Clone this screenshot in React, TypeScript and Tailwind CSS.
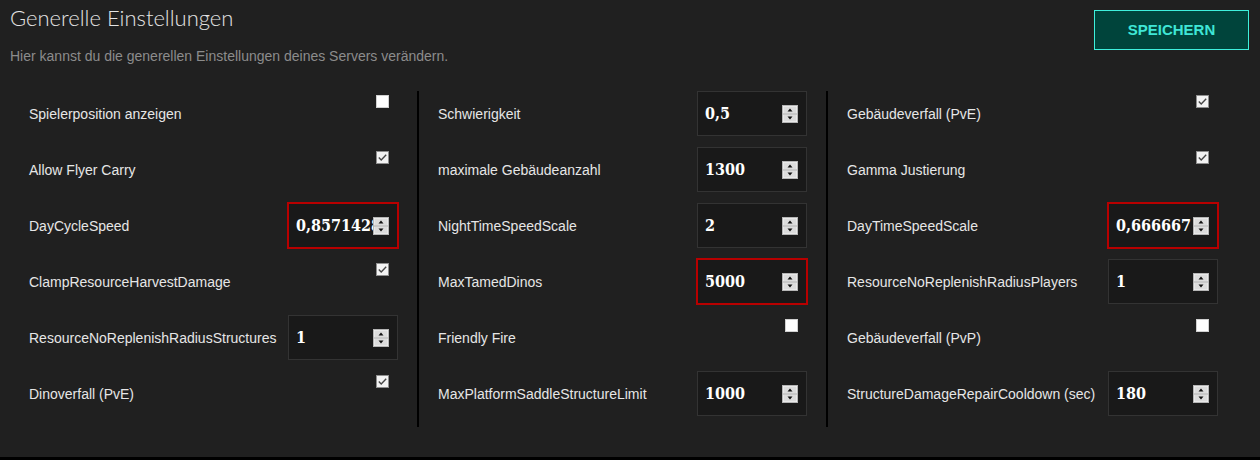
import React from 'react';

type Setting =
  | { label: string; kind: 'check'; checked: boolean }
  | { label: string; kind: 'number'; value: string; invalid?: boolean };

const columns: Setting[][] = [
  [
    { label: 'Spielerposition anzeigen', kind: 'check', checked: false },
    { label: 'Allow Flyer Carry', kind: 'check', checked: true },
    { label: 'DayCycleSpeed', kind: 'number', value: '0,857142857', invalid: true },
    { label: 'ClampResourceHarvestDamage', kind: 'check', checked: true },
    { label: 'ResourceNoReplenishRadiusStructures', kind: 'number', value: '1' },
    { label: 'Dinoverfall (PvE)', kind: 'check', checked: true },
  ],
  [
    { label: 'Schwierigkeit', kind: 'number', value: '0,5' },
    { label: 'maximale Gebäudeanzahl', kind: 'number', value: '1300' },
    { label: 'NightTimeSpeedScale', kind: 'number', value: '2' },
    { label: 'MaxTamedDinos', kind: 'number', value: '5000', invalid: true },
    { label: 'Friendly Fire', kind: 'check', checked: false },
    { label: 'MaxPlatformSaddleStructureLimit', kind: 'number', value: '1000' },
  ],
  [
    { label: 'Gebäudeverfall (PvE)', kind: 'check', checked: true },
    { label: 'Gamma Justierung', kind: 'check', checked: true },
    { label: 'DayTimeSpeedScale', kind: 'number', value: '0,666667', invalid: true },
    { label: 'ResourceNoReplenishRadiusPlayers', kind: 'number', value: '1' },
    { label: 'Gebäudeverfall (PvP)', kind: 'check', checked: false },
    { label: 'StructureDamageRepairCooldown (sec)', kind: 'number', value: '180' },
  ],
];

const Spinner = () => (
  <svg width="16" height="18" viewBox="0 0 16 18" className="shrink-0">
    <rect x="0.5" y="0.5" width="15" height="17" fill="#f4f4f4" stroke="#b5b5b5" />
    <rect x="1.5" y="1.5" width="13" height="7" fill="#dcdcdc" />
    <rect x="1.5" y="9.5" width="13" height="7" fill="#dcdcdc" />
    <line x1="1" y1="9" x2="15" y2="9" stroke="#a8a8a8" />
    <path d="M8 3.5 L10.5 6.5 L5.5 6.5 Z" fill="#111" />
    <path d="M8 14.5 L10.5 11.5 L5.5 11.5 Z" fill="#111" />
  </svg>
);

const Checkbox = ({ checked }: { checked: boolean }) => (
  <svg width="13" height="13" viewBox="0 0 13 13">
    <rect
      x="0.5"
      y="0.5"
      width="12"
      height="12"
      fill={checked ? '#f3f3f3' : '#ffffff'}
      stroke={checked ? '#8f8f8f' : '#d0d0d0'}
    />
    {checked && (
      <path d="M2.8 6.6 L5.2 9 L10.2 3.8" fill="none" stroke="#474747" strokeWidth="1.4" />
    )}
  </svg>
);

const NumberField = ({ value, invalid }: { value: string; invalid?: boolean }) => (
  <div
    className={`w-[110px] h-[45px] flex items-center pl-[7px] pr-[8px] bg-[#191919] border border-[#333333] ${
      invalid ? 'outline-2 outline-[#b80000] -outline-offset-1' : ''
    }`}
  >
    <span className="flex-1 overflow-hidden whitespace-nowrap text-white text-[16px] font-bold font-stretch-condensed font-['DejaVu_Serif',serif]">
      {value}
    </span>
    <Spinner />
  </div>
);

const SettingRow = ({ item }: { item: Setting }) => (
  <div className="flex h-[56px] items-start">
    <div className="flex-1 h-[45px] flex items-center pt-[1px] text-[14px] text-[#e6e6e6] whitespace-nowrap">
      {item.label}
    </div>
    {item.kind === 'number' ? (
      <NumberField value={item.value} invalid={item.invalid} />
    ) : (
      <div className="w-[110px] flex justify-end pr-[9px] pt-[4px]">
        <Checkbox checked={item.checked} />
      </div>
    )}
  </div>
);

export default function App() {
  return (
    <div className="h-[460px] bg-black font-['Liberation_Sans',Arial,sans-serif]">
      <div className="h-[457px] bg-[#202020]">
        <div className="flex items-start justify-between">
          <div className="pl-[10px] pt-[5px]">
            <h1 className="text-[22px] leading-[26px] font-light text-[#e4e4e4] font-['Lato',sans-serif]">
              Generelle Einstellungen
            </h1>
            <p className="mt-[17px] text-[14px] leading-[17px] text-[#8c8c8c]">
              Hier kannst du die generellen Einstellungen deines Servers verändern.
            </p>
          </div>
          <button className="mt-[10px] mr-[11px] w-[155px] h-[40px] bg-[#00443b] border border-[#3ff0dc] text-[#3fe6d6] text-[15px] font-bold">
            SPEICHERN
          </button>
        </div>
        <div className="mt-[26px] pl-[10px] flex">
          {columns.map((col, i) => (
            <div
              key={i}
              className={`w-[409px] px-[19px] ${i < 2 ? 'border-r-2 border-black' : ''}`}
            >
              {col.map((item) => (
                <SettingRow key={item.label} item={item} />
              ))}
            </div>
          ))}
        </div>
      </div>
    </div>
  );
}
